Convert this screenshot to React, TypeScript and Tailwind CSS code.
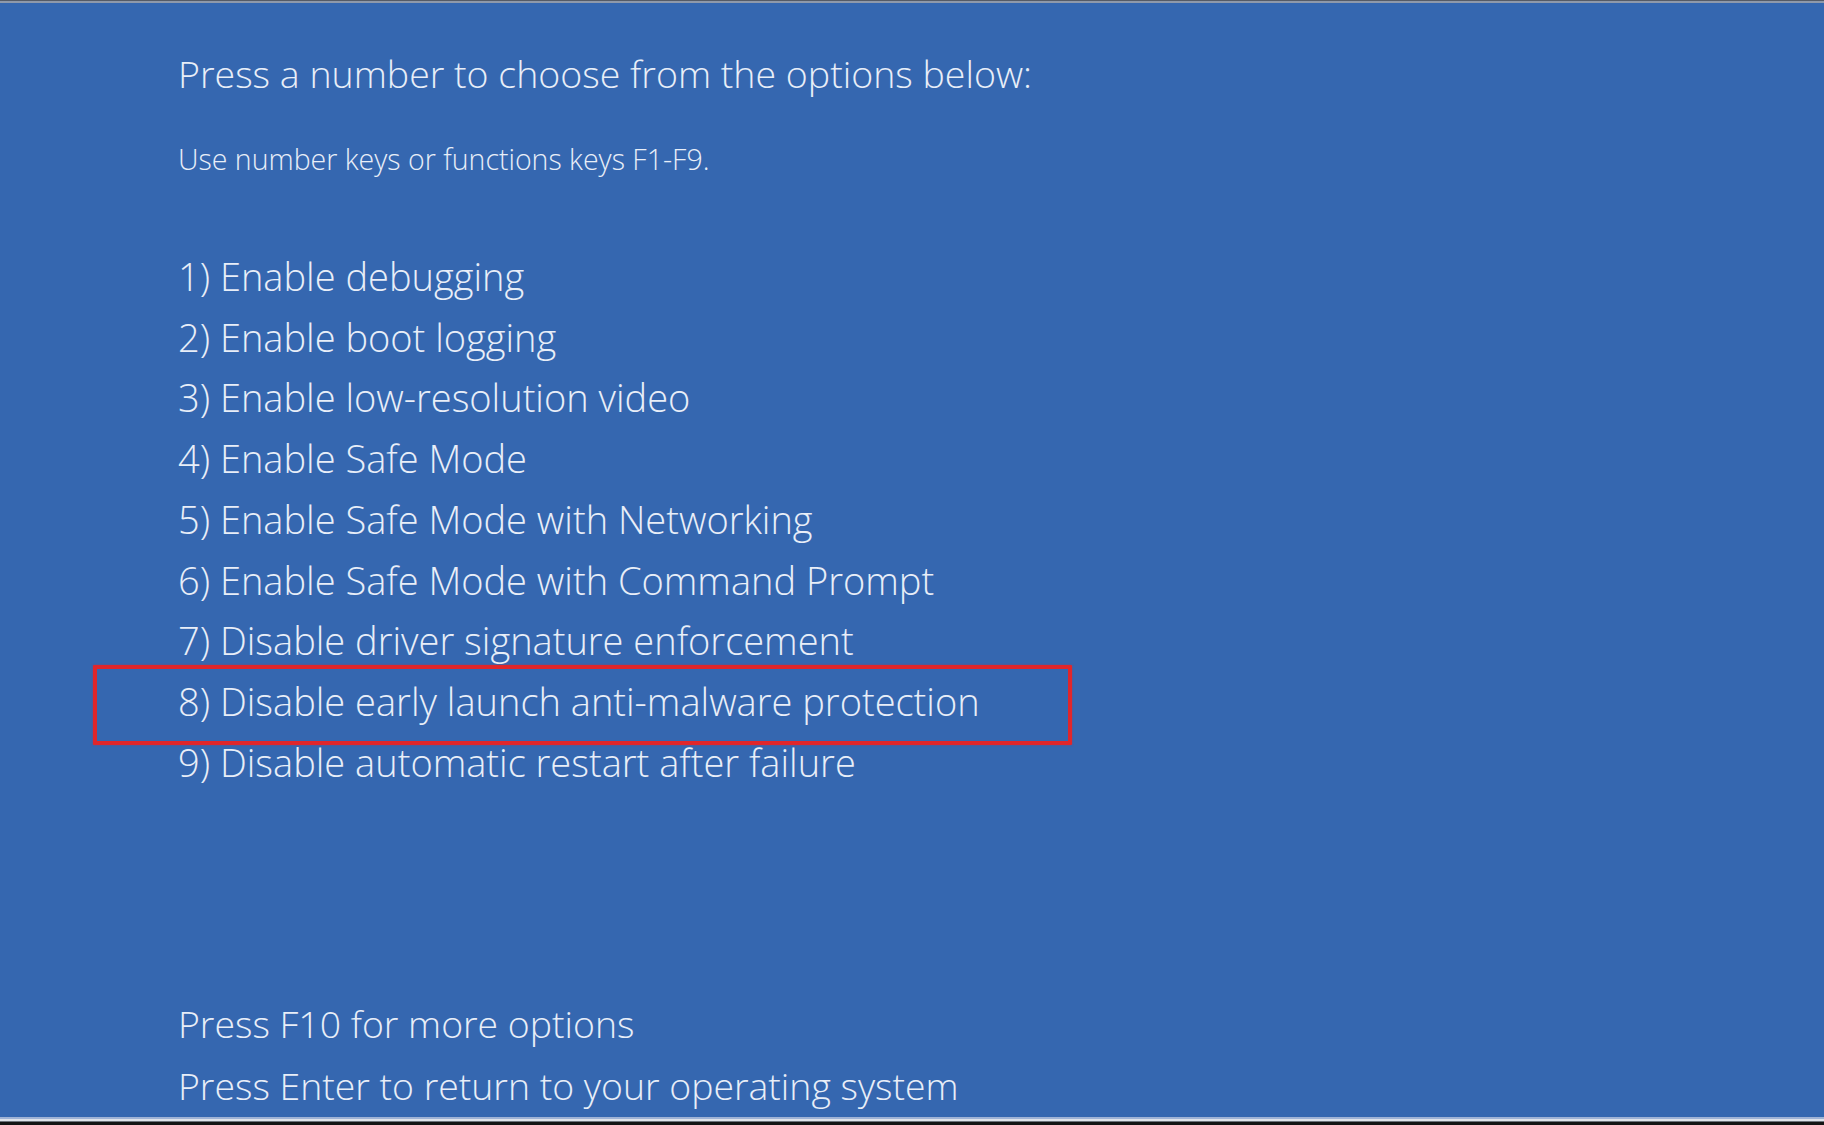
const options = [
  '1) Enable debugging',
  '2) Enable boot logging',
  '3) Enable low-resolution video',
  '4) Enable Safe Mode',
  '5) Enable Safe Mode with Networking',
  '6) Enable Safe Mode with Command Prompt',
  '7) Disable driver signature enforcement',
  '8) Disable early launch anti-malware protection',
  '9) Disable automatic restart after failure',
]

export default function App() {
  return (
    <div
      className="flex h-[1125px] w-full flex-col overflow-hidden bg-[#3567b0] text-[#e8eef8]"
      style={{ fontFamily: '"Open Sans", "Noto Sans", sans-serif' }}
    >
      {/* top edge of the captured screen */}
      <div className="h-[1px] bg-[#555b66]" />
      <div className="h-[2px] bg-[#8f99aa]" />

      <div className="flex-1 pl-[178px]">
        <p className="mt-[51px] text-[37.5px] leading-[40px] font-light">
          Press a number to choose from the options below:
        </p>
        <p className="mt-[45px] text-[28.5px] leading-[40px] font-light">
          Use number keys or functions keys F1-F9.
        </p>

        <ul className="mt-[67px]">
          {options.map((o, i) => (
            <li key={o} className="relative text-[38px] leading-[60.8px] font-light">
              {o}
              {i === 7 && (
                <span className="absolute top-[-6px] left-[-85px] h-[80px] w-[979px] rounded-[1px] border-4 border-[#e0262b] shadow-[0_0_2px_rgba(224,38,43,0.6)]" />
              )}
            </li>
          ))}
        </ul>

        <div className="mt-[200px] text-[37.4px] leading-[62px] font-light">
          <p>Press F10 for more options</p>
          <p>Press Enter to return to your operating system</p>
        </div>
      </div>

      {/* bottom edge */}
      <div className="h-[2px] bg-[#9fb3d6]" />
      <div className="h-[3px] bg-[#dfe3ea]" />
      <div className="h-[1px] bg-[#6e737b]" />
      <div className="h-[3px] bg-[#141414]" />
    </div>
  )
}
